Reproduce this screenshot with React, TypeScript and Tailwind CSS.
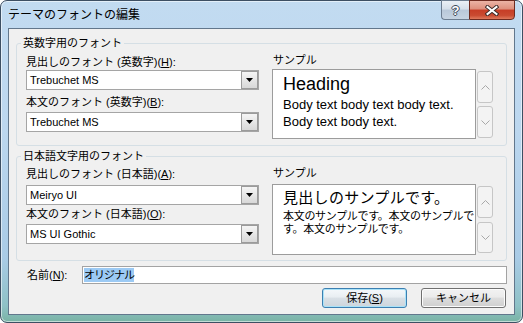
import type { ReactNode } from 'react';

function Triangle() {
  return (
    <svg width="7" height="4" viewBox="0 0 7 4">
      <path d="M0 0h7L3.5 4z" fill="#000" />
    </svg>
  );
}

function Combo({ value }: { value: string }) {
  return (
    <div className="flex h-[20px] w-[233px] border border-[#a5a5a5] bg-white">
      <span className="flex-1 pl-[3px] text-[11px] leading-[18px]">{value}</span>
      <span className="flex w-[17px] items-center justify-center border border-[#9b9b9b] bg-gradient-to-b from-[#f5f5f5] to-[#d8d8d8]">
        <Triangle />
      </span>
    </div>
  );
}

function Spin({ up, className }: { up?: boolean; className: string }) {
  return (
    <div
      className={
        'flex w-[16px] items-center justify-center rounded-[3px] border border-[#c6c6c6] bg-[#f3f3f3] ' + className
      }
    >
      <svg width="9" height="5" viewBox="0 0 9 5">
        <path
          d={up ? 'M0.5 4.5L4.5 0.5L8.5 4.5' : 'M0.5 0.5L4.5 4.5L8.5 0.5'}
          stroke="#a8a8a8"
          fill="none"
        />
      </svg>
    </div>
  );
}

function Label({ children, className = '' }: { children: ReactNode; className?: string }) {
  return <div className={'text-[11px] leading-[16px] ' + className}>{children}</div>;
}

function Accel({ k }: { k: string }) {
  return <u className="underline-offset-[1px]">{k}</u>;
}

export default function App() {
  return (
    <div className="h-[323px] w-[523px] font-['Liberation_Sans','Noto_Sans_CJK_JP',sans-serif] text-black">
      <div className="flex h-full w-full flex-col rounded-[7px] border border-[#3d4f63] bg-[linear-gradient(180deg,#c2dbf1_0%,#bcd7ef_40%,#a9cbe6_80%,#8ec1c6_95%,#79b3a4_100%)] shadow-[inset_0_0_0_1px_rgba(255,255,255,0.55)]">
        {/* title bar */}
        <div className="flex h-[27px] shrink-0 items-center justify-between">
          <span className="pl-[7px] text-[12px] leading-[16px]">テーマのフォントの編集</span>
          <div className="-mt-px flex self-start pr-[7px]">
            <div className="flex h-[20px] w-[28px] items-center justify-center rounded-bl-[4px] border border-r-0 border-[#6c7d90] bg-[linear-gradient(180deg,#eaf0f6_0%,#d5dfea_45%,#b9c8d9_50%,#c6d4e2_100%)] text-[13px] font-bold leading-none text-white [text-shadow:1px_0_#3c4a5a,-1px_0_#3c4a5a,0_1px_#3c4a5a,0_-1px_#3c4a5a]">
              ?
            </div>
            <div className="flex h-[20px] w-[46px] items-center justify-center rounded-br-[4px] border border-[#6e2b20] bg-[linear-gradient(180deg,#ebb3a5_0%,#dd8f7c_45%,#c63d26_50%,#c94b31_80%,#df7a5d_100%)]">
              <svg width="14" height="11" viewBox="0 0 14 11">
                <path d="M2.5 2L11.5 9M11.5 2L2.5 9" stroke="#3a2a28" strokeWidth="4" strokeLinecap="square" />
                <path d="M2.5 2L11.5 9M11.5 2L2.5 9" stroke="#fff" strokeWidth="2" strokeLinecap="square" />
              </svg>
            </div>
          </div>
        </div>

        {/* client area */}
        <div className="mx-[7px] flex flex-1 flex-col border border-[#62778c] bg-[#f0f0f0] px-[7px]">
          {/* group 1 */}
          <fieldset className="mt-[6px] rounded-[3px] border border-[#d5dfe5]">
            <legend className="ml-[4px] px-[2px] text-[11px] leading-[16px]">英数字用のフォント</legend>
            <div className="flex pb-[6px] pl-[9px]">
              <div className="flex w-[233px] flex-col pt-[3px]">
                <Label>
                  見出しのフォント (英数字)(<Accel k="H" />):
                </Label>
                <Combo value="Trebuchet MS" />
                <Label className="mt-[4px]">
                  本文のフォント (英数字)(<Accel k="B" />):
                </Label>
                <div className="mt-[2px]">
                  <Combo value="Trebuchet MS" />
                </div>
              </div>
              <div className="ml-[13px] flex flex-col pt-[1px]">
                <Label className="pl-px">サンプル</Label>
                <div className="mt-[1px] flex">
                  <div className="h-[70px] w-[204px] border border-[#9c9c9c] bg-white pl-[10px] pt-[2px] font-['Liberation_Sans',sans-serif]">
                    <div className="text-[18px] leading-[24px]">Heading</div>
                    <div className="text-[13px] leading-[17px]">Body text body text body text.</div>
                    <div className="text-[13px] leading-[17px]">Body text body text.</div>
                  </div>
                  <div className="ml-[1px] flex flex-col pt-[2px]">
                    <Spin up className="h-[32px]" />
                    <Spin className="mt-[3px] h-[32px]" />
                  </div>
                </div>
              </div>
            </div>
          </fieldset>

          {/* group 2 */}
          <fieldset className="mt-[2px] rounded-[3px] border border-[#d5dfe5]">
            <legend className="ml-[4px] px-[2px] text-[11px] leading-[16px]">日本語文字用のフォント</legend>
            <div className="flex pb-[5px] pl-[9px]">
              <div className="flex w-[233px] flex-col pt-[2px]">
                <Label>
                  見出しのフォント (日本語)(<Accel k="A" />):
                </Label>
                <div className="mt-[3px]">
                  <Combo value="Meiryo UI" />
                </div>
                <Label className="mt-[1px]">
                  本文のフォント (日本語)(<Accel k="O" />):
                </Label>
                <div className="mt-[2px]">
                  <Combo value="MS UI Gothic" />
                </div>
              </div>
              <div className="ml-[13px] flex flex-col pt-[1px]">
                <Label className="pl-px">サンプル</Label>
                <div className="mt-[3px] flex">
                  <div className="h-[71px] w-[204px] overflow-hidden border border-[#9c9c9c] bg-white pl-[10px] pt-[3px]">
                    <div className="whitespace-nowrap text-[15px] leading-[20px] tracking-[0.3px]">見出しのサンプルです。</div>
                    <div className="mt-[2px] whitespace-nowrap text-[11px] leading-[12.5px] tracking-[-0.3px]">
                      本文のサンプルです。本文のサンプルで
                      <br />
                      す。本文のサンプルです。
                    </div>
                  </div>
                  <div className="ml-[1px] flex flex-col pt-[2px]">
                    <Spin up className="h-[32px]" />
                    <Spin className="mt-[4px] h-[31px]" />
                  </div>
                </div>
              </div>
            </div>
          </fieldset>

          {/* name row */}
          <div className="mt-[5px] flex h-[18px] items-center">
            <span className="w-[66px] pl-[11px] text-[11px] leading-[16px]">
              名前(<Accel k="N" />):
            </span>
            <div className="flex h-full flex-1 items-center border border-[#a3a3a3] bg-white pl-px">
              <span className="bg-[#9ccaf4] text-[11px] leading-[14px] tracking-[-1px]">オリジナル</span>
            </div>
          </div>

          {/* buttons */}
          <div className="mt-[4px] flex justify-end gap-[14px] pr-px">
            <button className="h-[20px] w-[85px] rounded-[3px] border border-[#3c7fb1] bg-[linear-gradient(180deg,#f4f8fb_0%,#e9eef2_45%,#d9e0e6_50%,#cdd5dc_100%)] text-[11px] leading-[16px] shadow-[inset_0_0_0_1px_#a9e2f8]">
              保存(<Accel k="S" />)
            </button>
            <button className="h-[20px] w-[85px] rounded-[3px] border border-[#707070] bg-[linear-gradient(180deg,#f2f2f2_0%,#ebebeb_45%,#dddddd_50%,#cfcfcf_100%)] text-[11px] leading-[16px] shadow-[inset_0_0_0_1px_#fcfcfc]">
              キャンセル
            </button>
          </div>
        </div>
        <div className="h-[7px] shrink-0" />
      </div>
    </div>
  );
}
